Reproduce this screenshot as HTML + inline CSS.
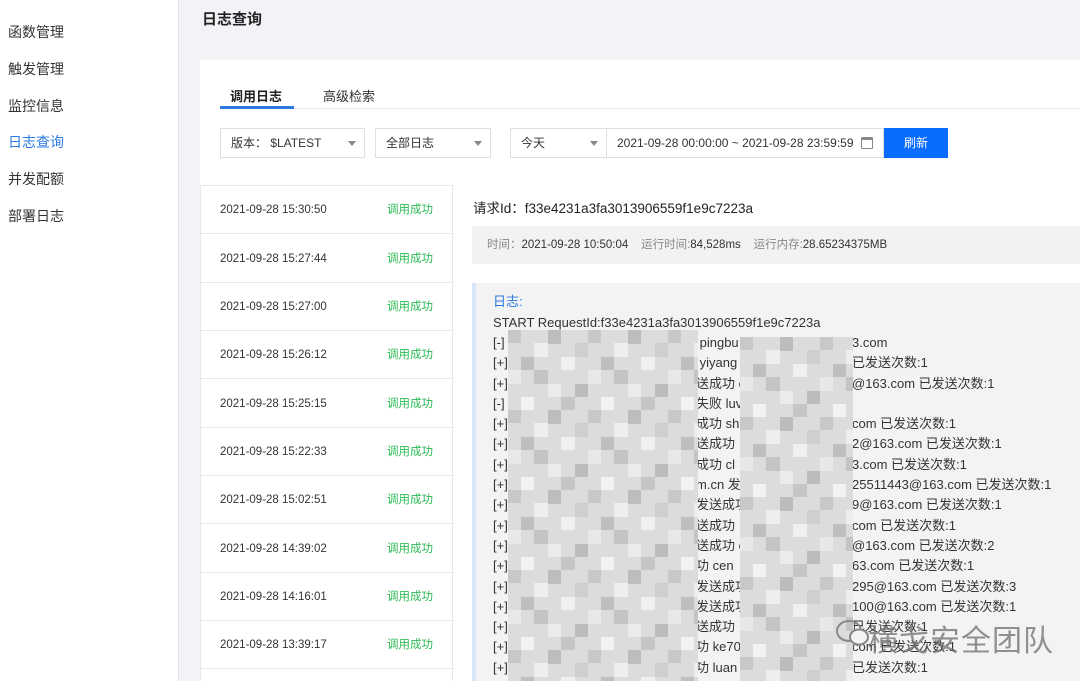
<!DOCTYPE html>
<html><head><meta charset="utf-8"><style>
*{margin:0;padding:0;box-sizing:border-box}
body{width:1080px;height:681px;overflow:hidden;background:#f2f3f7;font-family:"Liberation Sans","Noto Sans CJK SC",sans-serif;position:relative;color:#333}
.a{position:absolute;white-space:nowrap}
.side{left:0;top:0;width:179px;height:681px;background:#fff;border-right:1px solid #e3e5ea}
.side div{position:absolute;left:8px;font-size:14px;color:#333}
.card{left:200px;top:60px;width:880px;height:621px;background:#fff}
.sel{height:30px;border:1px solid #dcdfe6;background:#fff;font-size:12px;line-height:28px;padding-left:10px;color:#333}
.sel i{position:absolute;right:8px;top:12px;width:0;height:0;border-left:4px solid transparent;border-right:4px solid transparent;border-top:5px solid #888}
.item{left:200px;width:252px;height:48px;border-bottom:1px solid #e6e8ed;font-size:11.5px;color:#333;line-height:48px}
.item span{position:absolute;top:0;line-height:48px;height:48px}
.item .t{left:20px}.item .s{left:187px;color:#2dbb55}
.log{font-size:13px;color:#333;line-height:20px}
</style></head><body>
<div class="a side">
<div style="top:22px">函数管理</div>
<div style="top:59px">触发管理</div>
<div style="top:96px">监控信息</div>
<div style="top:132px;color:#2a7ae2">日志查询</div>
<div style="top:169px">并发配额</div>
<div style="top:206px">部署日志</div>
</div>
<div class="a" style="left:202px;top:8px;font-size:15px;font-weight:bold;color:#222">日志查询</div>
<div class="a card"></div>
<div class="a" style="left:230px;top:86px;font-size:13px;font-weight:bold;color:#222">调用日志</div>
<div class="a" style="left:323px;top:86px;font-size:13px;color:#333">高级检索</div>
<div class="a" style="left:220px;top:108px;width:860px;height:1px;background:#e6e8ed"></div>
<div class="a" style="left:220px;top:106px;width:74px;height:3px;background:#2a7ae2"></div>
<div class="a sel" style="left:220px;top:128px;width:145px">版本：&nbsp;$LATEST<i></i></div>
<div class="a sel" style="left:375px;top:128px;width:116px">全部日志<i></i></div>
<div class="a sel" style="left:510px;top:128px;width:97px">今天<i></i></div>
<div class="a sel" style="left:606px;top:128px;width:278px">2021-09-28 00:00:00 ~ 2021-09-28 23:59:59
<span style="position:absolute;right:10px;top:8px;width:12px;height:12px;border:1.5px solid #888;border-top-width:3px;border-radius:1px"></span></div>
<div class="a" style="left:884px;top:128px;width:64px;height:30px;background:#0a6cff;color:#fff;font-size:12px;line-height:30px;text-align:center">刷新</div>
<div class="a" style="left:200px;top:185px;width:253px;height:496px;border:1px solid #e6e8ed;border-bottom:none"></div>
<div class="a item" style="top:186px"><span class="t">2021-09-28 15:30:50</span><span class="s">调用成功</span></div>
<div class="a item" style="top:235px"><span class="t">2021-09-28 15:27:44</span><span class="s">调用成功</span></div>
<div class="a item" style="top:283px"><span class="t">2021-09-28 15:27:00</span><span class="s">调用成功</span></div>
<div class="a item" style="top:331px"><span class="t">2021-09-28 15:26:12</span><span class="s">调用成功</span></div>
<div class="a item" style="top:380px"><span class="t">2021-09-28 15:25:15</span><span class="s">调用成功</span></div>
<div class="a item" style="top:428px"><span class="t">2021-09-28 15:22:33</span><span class="s">调用成功</span></div>
<div class="a item" style="top:476px"><span class="t">2021-09-28 15:02:51</span><span class="s">调用成功</span></div>
<div class="a item" style="top:525px"><span class="t">2021-09-28 14:39:02</span><span class="s">调用成功</span></div>
<div class="a item" style="top:573px"><span class="t">2021-09-28 14:16:01</span><span class="s">调用成功</span></div>
<div class="a item" style="top:621px"><span class="t">2021-09-28 13:39:17</span><span class="s">调用成功</span></div>
<div class="a" style="left:473px;top:197px;font-size:13.5px;color:#222">请求Id：f33e4231a3fa3013906559f1e9c7223a</div>
<div class="a" style="left:472px;top:226px;width:608px;height:38px;background:#f2f2f2;font-size:11.5px;line-height:38px;padding-left:15px;color:#333"><span style="color:#888">时间：</span>2021-09-28 10:50:04 &nbsp;&nbsp;&nbsp;<span style="color:#888">运行时间:</span>84,528ms &nbsp;&nbsp;&nbsp;<span style="color:#888">运行内存:</span>28.65234375MB</div>
<div class="a" style="left:472px;top:283px;width:608px;height:398px;background:#f3f3f3;border-left:4px solid #d6e7fa"></div>
<div class="a log" style="left:493px;top:292px;color:#2a7ae2">日志:</div>
<div class="a log" style="left:493px;top:313px">START RequestId:f33e4231a3fa3013906559f1e9c7223a</div>
<div class="a log" style="left:493px;top:333px;line-height:20.3px">[-]<br>[+]<br>[+]<br>[-]<br>[+]<br>[+]<br>[+]<br>[+]<br>[+]<br>[+]<br>[+]<br>[+]<br>[+]<br>[+]<br>[+]<br>[+]<br>[+]</div>
<div class="a log" style="left:696px;top:333px;line-height:20.3px">&nbsp;pingbu<br>&nbsp;yiyang<br>送成功 c<br>失败 luv<br>成功 sh<br>送成功<br>成功 cl<br>m.cn 发<br>发送成功<br>送成功<br>送成功 c<br>功 cen<br>发送成功<br>发送成功<br>送成功<br>功 ke70<br>功 luan</div>
<div class="a log" style="left:852px;top:333px;line-height:20.3px">3.com<br>已发送次数:1<br>@163.com 已发送次数:1<br>&nbsp;<br>com 已发送次数:1<br>2@163.com 已发送次数:1<br>3.com 已发送次数:1<br>25511443@163.com 已发送次数:1<br>9@163.com 已发送次数:1<br>com 已发送次数:1<br>@163.com 已发送次数:2<br>63.com 已发送次数:1<br>295@163.com 已发送次数:3<br>100@163.com 已发送次数:1<br>已发送次数:1<br>com 已发送次数:1<br>已发送次数:1</div>
<svg class="a" style="left:508px;top:330px" width="190" height="351">
<defs><pattern id="m" width="80" height="80" patternUnits="userSpaceOnUse">
<rect width="80" height="80" fill="#dcdcdc"/>
<rect x="0" y="0" width="13" height="13" fill="#c8c8c8"/><rect x="26" y="13" width="14" height="14" fill="#eeeeee"/>
<rect x="40" y="0" width="13" height="14" fill="#bdbdbd"/><rect x="13" y="27" width="13" height="13" fill="#bfbfbf"/>
<rect x="53" y="27" width="14" height="13" fill="#f0f0f0"/><rect x="0" y="40" width="13" height="14" fill="#e8e8e8"/>
<rect x="26" y="40" width="14" height="14" fill="#c4c4c4"/><rect x="67" y="54" width="13" height="13" fill="#bcbcbc"/>
<rect x="40" y="54" width="13" height="13" fill="#ebebeb"/><rect x="13" y="67" width="13" height="13" fill="#f2f2f2"/>
<rect x="53" y="67" width="14" height="13" fill="#c6c6c6"/><rect x="67" y="13" width="13" height="14" fill="#cfcfcf"/>
</pattern></defs>
<rect width="190" height="351" fill="url(#m)"/></svg>
<svg class="a" style="left:740px;top:337px" width="113" height="344">
<rect width="113" height="344" fill="url(#m)"/></svg>
<svg class="a" style="left:835px;top:618px" width="36" height="30"><ellipse cx="14" cy="13" rx="12" ry="10" fill="none" stroke="#888" stroke-width="2"/><ellipse cx="24" cy="19" rx="9" ry="7.5" fill="#f3f3f3" stroke="#888" stroke-width="2"/></svg>
<div class="a" style="left:868px;top:616px;font-size:30px;color:rgba(110,110,110,0.75);letter-spacing:1px">横戈安全团队</div>
</body></html>
